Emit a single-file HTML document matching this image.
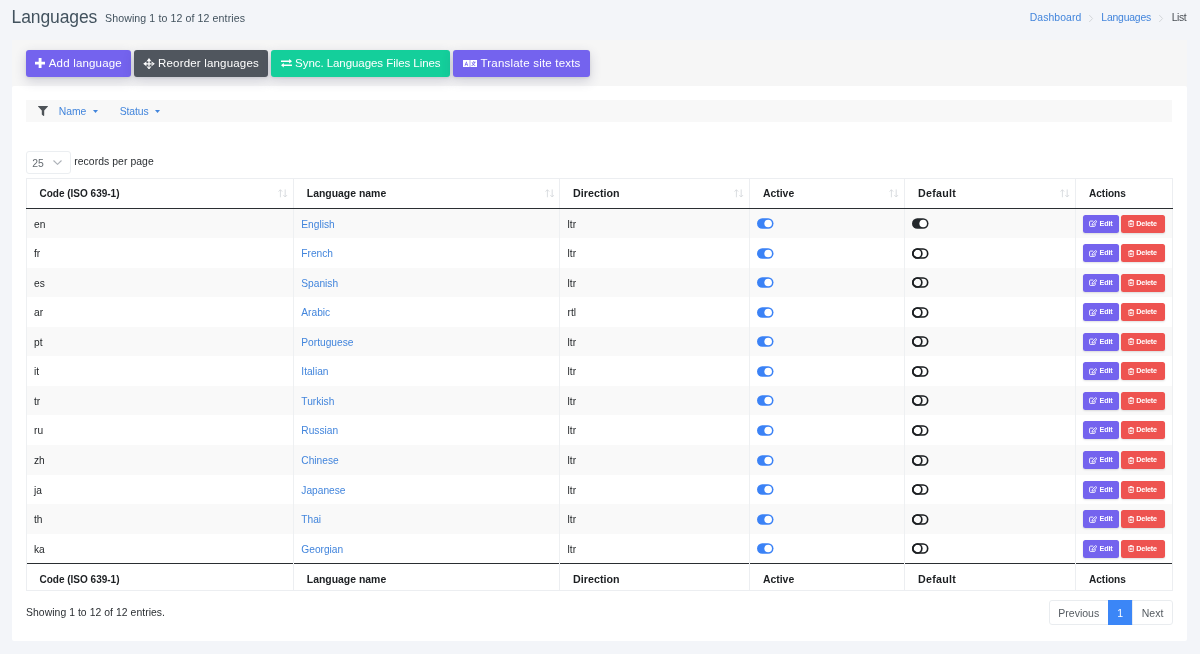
<!DOCTYPE html>
<html lang="en">
<head>
<meta charset="utf-8">
<title>Languages</title>
<style>
*{box-sizing:border-box;margin:0;padding:0}
html,body{width:1200px;height:654px;overflow:hidden}
body{background:#f3f5f9;font-family:"Liberation Sans",sans-serif;color:#2b2f33;position:relative;font-size:10.5px}
a{color:#4285dc;text-decoration:none}
main{position:absolute;left:0;top:0;width:1200px;height:654px;will-change:transform}
.abs{position:absolute;white-space:nowrap}
h1.abs{font-weight:400}
.btn{position:absolute;top:50px;height:27px;border-radius:3px;color:#fff;box-shadow:0 4px 12px rgba(50,50,93,.20),0 1px 3px rgba(0,0,0,.08)}
.btn .abs{color:#fff}
.btn svg{position:absolute;fill:#fff}
.band{position:absolute;left:12px;top:39.5px;width:1175px;height:50px;background:#f6f6f6}
.card{position:absolute;left:12px;top:86px;width:1175px;height:555px;background:#fff;border-radius:2px}
.filters{position:absolute;left:26px;top:100px;width:1146px;height:22px;background:#f8f8f8}
.sel{position:absolute;left:26px;top:151px;width:45px;height:22.6px;border:1px solid #ebeef1;border-radius:3px;background:#fff}
table{position:absolute;left:25.5px;top:178px;width:1147.4px;border-collapse:collapse;table-layout:fixed}
th{text-align:left;vertical-align:baseline;line-height:14px;font-weight:700;font-size:9.9px;color:#1c1f22;padding:7px 0 0 13px;border:1px solid #eceef1;position:relative;white-space:nowrap}
thead th{height:30px;border-bottom:1px solid #2a2e32}
tfoot th{height:27px;padding-top:8px;border-top:1px solid #2a2e32}
td{padding:1px 0 0 7.5px;border-left:1px solid #eef0f2;border-right:1px solid #eef0f2;color:#25282b;vertical-align:middle;font-size:10.2px;white-space:nowrap;position:relative}
tbody tr:nth-child(odd){background:#f9f9f9}
.sort{position:absolute;right:5px;top:10.3px;width:9.6px;height:8.7px}
.tg{display:block;width:16.5px;height:11px;position:relative;top:-.2px}
.ab{position:absolute;top:calc(50% - 8.9px);height:18px;border-radius:2.5px;color:#fff;font-size:7.2px;font-weight:700;letter-spacing:-0.15px;line-height:18.4px;box-shadow:0 1px 2px rgba(0,0,0,.12)}
.ab svg{position:absolute;left:6px;top:5.6px;width:8.6px;height:7px}
.ab span{position:absolute;top:0}
.pg{position:absolute;top:600px;height:25px;line-height:24px;font-size:10.5px;color:#555b61;border:1px solid #e9ecef;background:#fff;text-align:center}
</style>
</head>
<body>
<main>
<div class="band"></div>
<div class="card"></div>
<header>
<h1 class="abs" style="left:11.60px;top:4.01px;font-size:17.5px;line-height:26.25px;letter-spacing:-0.116px;color:#42525e;">Languages</h1>
<small class="abs" style="left:105.00px;top:11.38px;font-size:10.6px;line-height:15.9px;letter-spacing:0.099px;color:#42525e;">Showing 1 to 12 of 12 entries</small>
<nav>
<a class="abs" style="left:1029.70px;top:10.20px;font-size:10.4px;line-height:15.6px;letter-spacing:0.095px;color:#4285dc;">Dashboard</a>
<svg class="abs" style="left:1088px;top:13.500px" width="6" height="9" viewBox="0 0 6 9"><path d="M1.2 1 L4.6 4.5 L1.2 8" fill="none" stroke="#d3d6da" stroke-width="1"/></svg>
<a class="abs" style="left:1101.30px;top:10.20px;font-size:10.4px;line-height:15.6px;letter-spacing:-0.192px;color:#4285dc;">Languages</a>
<svg class="abs" style="left:1158px;top:13.500px" width="6" height="9" viewBox="0 0 6 9"><path d="M1.2 1 L4.6 4.5 L1.2 8" fill="none" stroke="#d3d6da" stroke-width="1"/></svg>
<span class="abs" style="left:1171.70px;top:10.20px;font-size:10.4px;line-height:15.6px;letter-spacing:-0.391px;color:#4a4f55;">List</span>
</nav>
</header>
<section class="toolbar">
<a class="btn" style="left:26px;width:105px;background:#7463ee"><svg style="left:9.1px;top:8.3px" width="10.200" height="10.200" viewBox="0 0 10 10"><path d="M3.600 0h2.800v3.600H10v2.800H6.400V10H3.600V6.400H0V3.600h3.600z"/></svg><span class="abs" style="left:22.75px;top:4.89px;font-size:11.5px;line-height:17.25px;letter-spacing:0.183px;color:#fff;">Add language</span></a>
<a class="btn" style="left:134px;width:134px;background:#50565e"><svg style="left:9px;top:7.8px" width="12" height="11.6" viewBox="0 0 12 12"><path d="M6 0 L8.5 3.300H3.500z M6 12 L8.500 8.700H3.500z M0 6 L3.300 3.500V8.500z M12 6 L8.700 3.500V8.500z M5.350 2.500h1.300v7h-1.300z M2.500 5.350h7v1.300h-7z"/></svg><span class="abs" style="left:24.00px;top:4.89px;font-size:11.5px;line-height:17.25px;letter-spacing:0.183px;color:#fff;">Reorder languages</span></a>
<a class="btn" style="left:271.4px;width:178.20000000000005px;background:#14cf9b"><svg style="left:9.4px;top:9.4px" width="11" height="8.4" viewBox="0 0 11 8.4"><path d="M8.2 0 L11 2.2 8.2 4.4V2.9H0V1.5H8.2z M2.8 4 V5.5H11V6.9H2.8V8.4L0 6.2z"/></svg><span class="abs" style="left:23.70px;top:4.89px;font-size:11.5px;line-height:17.25px;letter-spacing:-0.059px;color:#fff;">Sync. Languages Files Lines</span></a>
<a class="btn" style="left:453.2px;width:136.8px;background:#7463ee"><svg style="left:9.5px;top:10px" width="14" height="7" viewBox="0 0 14 7"><path fill-rule="evenodd" d="M0 0h6.7v7H0z M3.35 1.3 L1.5 5.7h.9l.3-.9h1.3l.3.9h.9z M3.35 2.7l.4 1.4h-.8z M7.3 0H14v7H7.3z M10.3 1.2v.7H8.6v.7h2.6c-.1.5-.4 1-.8 1.4-.3-.3-.5-.6-.6-.9h-.8c.2.5.5 1 .9 1.4-.4.3-.9.6-1.5.7l.3.7c.7-.2 1.300-.5 1.700-.9.400.4 1 .7 1.700.9l.3-.7c-.6-.1-1.100-.4-1.500-.7.500-.5.900-1.200 1-2h.8v-.7H11v-.7z"/></svg><span class="abs" style="left:27.30px;top:4.89px;font-size:11.5px;line-height:17.25px;letter-spacing:0.2px;color:#fff;">Translate site texts</span></a>
</section>
<div class="filters"></div>
<nav class="filterlinks">
<svg class="abs" style="left:37.5px;top:106.3px" width="10" height="10" viewBox="0 0 10 10"><path d="M0.3 0h9.4c.3 0 .4.3.2.5L6.2 4.6V9.6c0 .3-.3.5-.6.300L4 8.700c-.1-.1-.2-.2-.2-.4V4.600L0.100.5C-.1.300 0 0 .3 0z" fill="#4e5358"/></svg>
<a class="abs" style="left:58.70px;top:103.60px;font-size:10.4px;line-height:15.6px;letter-spacing:-0.04px;color:#4285dc;">Name</a>
<svg class="abs" style="left:92.5px;top:109.7px" width="5" height="3" viewBox="0 0 5 3"><path d="M0 0h5L2.500 3z" fill="#4285dc"/></svg>
<a class="abs" style="left:119.70px;top:103.60px;font-size:10.4px;line-height:15.6px;letter-spacing:-0.094px;color:#4285dc;">Status</a>
<svg class="abs" style="left:154.7px;top:109.7px" width="5" height="3" viewBox="0 0 5 3"><path d="M0 0h5L2.500 3z" fill="#4285dc"/></svg>
</nav>
<label>
<div class="sel"></div>
<span class="abs" style="left:32.20px;top:155.80px;font-size:10.4px;line-height:15.6px;letter-spacing:0.137px;color:#666c72;">25</span>
<svg class="abs" style="left:53px;top:160px" width="9" height="5" viewBox="0 0 9 5"><path d="M0.500 0.500 L4.500 4.300 8.500 0.500" fill="none" stroke="#adb2b8" stroke-width="1.150"/></svg>
<span class="abs" style="left:74.25px;top:154.10px;font-size:10.4px;line-height:15.6px;letter-spacing:0.062px;color:#2b2f33;">records per page</span>
</label>
<table>
<colgroup><col style="width:267.3px"><col style="width:266.3px"><col style="width:189.9px"><col style="width:155px"><col style="width:170.9px"><col style="width:97px"></colgroup>
<thead><tr><th style="font-size:10.02px;letter-spacing:-0.01px">Code (ISO 639-1)<svg class="sort" viewBox="0 0 10 10" preserveAspectRatio="none"><path d="M2.500 9.500V1 M0.600 3 L2.500 0.800 4.400 3 M7.500 0.500V9 M5.600 7 L7.500 9.200 9.400 7" fill="none" stroke="#d2d5d9" stroke-width="0.9"/></svg></th><th style="font-size:10.45px;letter-spacing:-0.006px">Language name<svg class="sort" viewBox="0 0 10 10" preserveAspectRatio="none"><path d="M2.500 9.500V1 M0.600 3 L2.500 0.800 4.400 3 M7.500 0.500V9 M5.600 7 L7.500 9.200 9.400 7" fill="none" stroke="#d2d5d9" stroke-width="0.9"/></svg></th><th style="font-size:10.7px;letter-spacing:0.021px">Direction<svg class="sort" viewBox="0 0 10 10" preserveAspectRatio="none"><path d="M2.500 9.500V1 M0.600 3 L2.500 0.800 4.400 3 M7.500 0.500V9 M5.600 7 L7.500 9.200 9.400 7" fill="none" stroke="#d2d5d9" stroke-width="0.9"/></svg></th><th style="font-size:10.42px;letter-spacing:-0.007px">Active<svg class="sort" viewBox="0 0 10 10" preserveAspectRatio="none"><path d="M2.500 9.500V1 M0.600 3 L2.500 0.800 4.400 3 M7.500 0.500V9 M5.600 7 L7.500 9.200 9.400 7" fill="none" stroke="#d2d5d9" stroke-width="0.9"/></svg></th><th style="font-size:10.7px;letter-spacing:0.261px">Default<svg class="sort" viewBox="0 0 10 10" preserveAspectRatio="none"><path d="M2.500 9.500V1 M0.600 3 L2.500 0.800 4.400 3 M7.500 0.500V9 M5.600 7 L7.500 9.200 9.400 7" fill="none" stroke="#d2d5d9" stroke-width="0.9"/></svg></th><th style="font-size:10.11px;letter-spacing:-0.003px">Actions</th></tr></thead>
<tbody>
<tr style="height:29.5px"><td>en</td><td><a>English</a></td><td>ltr</td><td><svg class="tg" viewBox="0 0 17 11"><rect width="17" height="11" rx="5.500" fill="#3b82f6"/><circle cx="11.500" cy="5.500" r="3.900" fill="#fff"/></svg></td><td><svg class="tg" viewBox="0 0 17 11"><rect width="17" height="11" rx="5.500" fill="#24282c"/><circle cx="11.500" cy="5.500" r="3.900" fill="#fff"/></svg></td><td><a class="ab" style="left:7.500px;width:36px;background:#7463ee"><svg viewBox="0 0 8.6 7"><path d="M4.300 1.100H1.300c-.4 0-.7.300-.7.700v3.900c0 .4.300.7.700.7h4.200c.4 0 .7-.300.700-.7V3.900 M3.300 3.700 L6.700.5l1.200 1.100-3.500 3.300-1.400.2z" fill="none" stroke="#fff" stroke-width="0.9"/></svg><span style="left:16.2px">Edit</span></a><a class="ab" style="left:45.4px;width:43.4px;background:#ee5350"><svg viewBox="0 0 8.6 7" style="left:6.3px"><path d="M0.300 1.400h5.600 M2 1.400V.5h2.200v.9 M.9 1.400v4.600c0 .3.200.5.500.5h3.400c.3 0 .5-.2.500-.5V1.400 M2.400 2.800v2.400 M3.800 2.800v2.400" fill="none" stroke="#fff" stroke-width="0.85"/></svg><span style="left:15px">Delete</span></a></td></tr>
<tr style="height:30px"><td>fr</td><td><a>French</a></td><td>ltr</td><td><svg class="tg" viewBox="0 0 17 11"><rect width="17" height="11" rx="5.500" fill="#3b82f6"/><circle cx="11.500" cy="5.500" r="3.900" fill="#fff"/></svg></td><td><svg class="tg" viewBox="0 0 17 11"><rect x="0.850" y="0.850" width="15.300" height="9.300" rx="4.650" fill="none" stroke="#1b1e21" stroke-width="1.700"/><circle cx="5.500" cy="5.500" r="4.650" fill="none" stroke="#1b1e21" stroke-width="1.700"/></svg></td><td><a class="ab" style="left:7.500px;width:36px;background:#7463ee"><svg viewBox="0 0 8.6 7"><path d="M4.300 1.100H1.300c-.4 0-.7.300-.7.700v3.900c0 .4.300.7.700.7h4.200c.4 0 .7-.300.700-.7V3.900 M3.300 3.700 L6.700.5l1.200 1.100-3.500 3.300-1.400.2z" fill="none" stroke="#fff" stroke-width="0.9"/></svg><span style="left:16.2px">Edit</span></a><a class="ab" style="left:45.4px;width:43.4px;background:#ee5350"><svg viewBox="0 0 8.6 7" style="left:6.3px"><path d="M0.300 1.400h5.600 M2 1.400V.5h2.200v.9 M.9 1.400v4.600c0 .3.200.5.500.5h3.400c.3 0 .5-.2.500-.5V1.400 M2.400 2.800v2.400 M3.800 2.800v2.400" fill="none" stroke="#fff" stroke-width="0.85"/></svg><span style="left:15px">Delete</span></a></td></tr>
<tr style="height:29px"><td>es</td><td><a>Spanish</a></td><td>ltr</td><td><svg class="tg" viewBox="0 0 17 11"><rect width="17" height="11" rx="5.500" fill="#3b82f6"/><circle cx="11.500" cy="5.500" r="3.900" fill="#fff"/></svg></td><td><svg class="tg" viewBox="0 0 17 11"><rect x="0.850" y="0.850" width="15.300" height="9.300" rx="4.650" fill="none" stroke="#1b1e21" stroke-width="1.700"/><circle cx="5.500" cy="5.500" r="4.650" fill="none" stroke="#1b1e21" stroke-width="1.700"/></svg></td><td><a class="ab" style="left:7.500px;width:36px;background:#7463ee"><svg viewBox="0 0 8.6 7"><path d="M4.300 1.100H1.300c-.4 0-.7.300-.7.700v3.900c0 .4.300.7.700.7h4.200c.4 0 .7-.300.700-.7V3.900 M3.300 3.700 L6.700.5l1.200 1.100-3.500 3.300-1.400.2z" fill="none" stroke="#fff" stroke-width="0.9"/></svg><span style="left:16.2px">Edit</span></a><a class="ab" style="left:45.4px;width:43.4px;background:#ee5350"><svg viewBox="0 0 8.6 7" style="left:6.3px"><path d="M0.300 1.400h5.600 M2 1.400V.5h2.200v.9 M.9 1.400v4.600c0 .3.200.5.500.5h3.400c.3 0 .5-.2.500-.5V1.400 M2.400 2.800v2.400 M3.800 2.800v2.400" fill="none" stroke="#fff" stroke-width="0.85"/></svg><span style="left:15px">Delete</span></a></td></tr>
<tr style="height:30px"><td>ar</td><td><a>Arabic</a></td><td>rtl</td><td><svg class="tg" viewBox="0 0 17 11"><rect width="17" height="11" rx="5.500" fill="#3b82f6"/><circle cx="11.500" cy="5.500" r="3.900" fill="#fff"/></svg></td><td><svg class="tg" viewBox="0 0 17 11"><rect x="0.850" y="0.850" width="15.300" height="9.300" rx="4.650" fill="none" stroke="#1b1e21" stroke-width="1.700"/><circle cx="5.500" cy="5.500" r="4.650" fill="none" stroke="#1b1e21" stroke-width="1.700"/></svg></td><td><a class="ab" style="left:7.500px;width:36px;background:#7463ee"><svg viewBox="0 0 8.6 7"><path d="M4.300 1.100H1.300c-.4 0-.7.300-.7.700v3.900c0 .4.300.7.700.7h4.200c.4 0 .7-.300.700-.7V3.900 M3.300 3.700 L6.700.5l1.200 1.100-3.500 3.300-1.400.2z" fill="none" stroke="#fff" stroke-width="0.9"/></svg><span style="left:16.2px">Edit</span></a><a class="ab" style="left:45.4px;width:43.4px;background:#ee5350"><svg viewBox="0 0 8.6 7" style="left:6.3px"><path d="M0.300 1.400h5.600 M2 1.400V.5h2.200v.9 M.9 1.400v4.600c0 .3.200.5.500.5h3.400c.3 0 .5-.2.500-.5V1.400 M2.400 2.800v2.400 M3.800 2.800v2.400" fill="none" stroke="#fff" stroke-width="0.85"/></svg><span style="left:15px">Delete</span></a></td></tr>
<tr style="height:29px"><td>pt</td><td><a>Portuguese</a></td><td>ltr</td><td><svg class="tg" viewBox="0 0 17 11"><rect width="17" height="11" rx="5.500" fill="#3b82f6"/><circle cx="11.500" cy="5.500" r="3.900" fill="#fff"/></svg></td><td><svg class="tg" viewBox="0 0 17 11"><rect x="0.850" y="0.850" width="15.300" height="9.300" rx="4.650" fill="none" stroke="#1b1e21" stroke-width="1.700"/><circle cx="5.500" cy="5.500" r="4.650" fill="none" stroke="#1b1e21" stroke-width="1.700"/></svg></td><td><a class="ab" style="left:7.500px;width:36px;background:#7463ee"><svg viewBox="0 0 8.6 7"><path d="M4.300 1.100H1.300c-.4 0-.7.300-.7.700v3.900c0 .4.300.7.700.7h4.200c.4 0 .7-.300.700-.7V3.900 M3.300 3.700 L6.700.5l1.200 1.100-3.500 3.300-1.400.2z" fill="none" stroke="#fff" stroke-width="0.9"/></svg><span style="left:16.2px">Edit</span></a><a class="ab" style="left:45.4px;width:43.4px;background:#ee5350"><svg viewBox="0 0 8.6 7" style="left:6.3px"><path d="M0.300 1.400h5.600 M2 1.400V.5h2.200v.9 M.9 1.400v4.600c0 .3.200.5.500.5h3.400c.3 0 .5-.2.500-.5V1.400 M2.400 2.800v2.400 M3.800 2.800v2.400" fill="none" stroke="#fff" stroke-width="0.85"/></svg><span style="left:15px">Delete</span></a></td></tr>
<tr style="height:30px"><td>it</td><td><a>Italian</a></td><td>ltr</td><td><svg class="tg" viewBox="0 0 17 11"><rect width="17" height="11" rx="5.500" fill="#3b82f6"/><circle cx="11.500" cy="5.500" r="3.900" fill="#fff"/></svg></td><td><svg class="tg" viewBox="0 0 17 11"><rect x="0.850" y="0.850" width="15.300" height="9.300" rx="4.650" fill="none" stroke="#1b1e21" stroke-width="1.700"/><circle cx="5.500" cy="5.500" r="4.650" fill="none" stroke="#1b1e21" stroke-width="1.700"/></svg></td><td><a class="ab" style="left:7.500px;width:36px;background:#7463ee"><svg viewBox="0 0 8.6 7"><path d="M4.300 1.100H1.300c-.4 0-.7.300-.7.700v3.900c0 .4.300.7.700.7h4.200c.4 0 .7-.300.700-.7V3.900 M3.300 3.700 L6.700.5l1.200 1.100-3.500 3.300-1.400.2z" fill="none" stroke="#fff" stroke-width="0.9"/></svg><span style="left:16.2px">Edit</span></a><a class="ab" style="left:45.4px;width:43.4px;background:#ee5350"><svg viewBox="0 0 8.6 7" style="left:6.3px"><path d="M0.300 1.400h5.600 M2 1.400V.5h2.200v.9 M.9 1.400v4.600c0 .3.200.5.500.5h3.400c.3 0 .5-.2.500-.5V1.400 M2.400 2.800v2.400 M3.800 2.800v2.400" fill="none" stroke="#fff" stroke-width="0.85"/></svg><span style="left:15px">Delete</span></a></td></tr>
<tr style="height:29px"><td>tr</td><td><a>Turkish</a></td><td>ltr</td><td><svg class="tg" viewBox="0 0 17 11"><rect width="17" height="11" rx="5.500" fill="#3b82f6"/><circle cx="11.500" cy="5.500" r="3.900" fill="#fff"/></svg></td><td><svg class="tg" viewBox="0 0 17 11"><rect x="0.850" y="0.850" width="15.300" height="9.300" rx="4.650" fill="none" stroke="#1b1e21" stroke-width="1.700"/><circle cx="5.500" cy="5.500" r="4.650" fill="none" stroke="#1b1e21" stroke-width="1.700"/></svg></td><td><a class="ab" style="left:7.500px;width:36px;background:#7463ee"><svg viewBox="0 0 8.6 7"><path d="M4.300 1.100H1.300c-.4 0-.7.300-.7.700v3.900c0 .4.300.7.700.7h4.200c.4 0 .7-.300.700-.7V3.900 M3.300 3.700 L6.700.5l1.200 1.100-3.500 3.300-1.400.2z" fill="none" stroke="#fff" stroke-width="0.9"/></svg><span style="left:16.2px">Edit</span></a><a class="ab" style="left:45.4px;width:43.4px;background:#ee5350"><svg viewBox="0 0 8.6 7" style="left:6.3px"><path d="M0.300 1.400h5.600 M2 1.400V.5h2.200v.9 M.9 1.400v4.600c0 .3.200.5.500.5h3.400c.3 0 .5-.2.500-.5V1.400 M2.400 2.800v2.400 M3.800 2.800v2.400" fill="none" stroke="#fff" stroke-width="0.85"/></svg><span style="left:15px">Delete</span></a></td></tr>
<tr style="height:30px"><td>ru</td><td><a>Russian</a></td><td>ltr</td><td><svg class="tg" viewBox="0 0 17 11"><rect width="17" height="11" rx="5.500" fill="#3b82f6"/><circle cx="11.500" cy="5.500" r="3.900" fill="#fff"/></svg></td><td><svg class="tg" viewBox="0 0 17 11"><rect x="0.850" y="0.850" width="15.300" height="9.300" rx="4.650" fill="none" stroke="#1b1e21" stroke-width="1.700"/><circle cx="5.500" cy="5.500" r="4.650" fill="none" stroke="#1b1e21" stroke-width="1.700"/></svg></td><td><a class="ab" style="left:7.500px;width:36px;background:#7463ee"><svg viewBox="0 0 8.6 7"><path d="M4.300 1.100H1.300c-.4 0-.7.300-.7.700v3.900c0 .4.300.7.700.7h4.200c.4 0 .7-.300.700-.7V3.900 M3.300 3.700 L6.700.5l1.200 1.100-3.500 3.300-1.400.2z" fill="none" stroke="#fff" stroke-width="0.9"/></svg><span style="left:16.2px">Edit</span></a><a class="ab" style="left:45.4px;width:43.4px;background:#ee5350"><svg viewBox="0 0 8.6 7" style="left:6.3px"><path d="M0.300 1.400h5.600 M2 1.400V.5h2.200v.9 M.9 1.400v4.600c0 .3.200.5.500.5h3.400c.3 0 .5-.2.500-.5V1.400 M2.400 2.800v2.400 M3.800 2.800v2.400" fill="none" stroke="#fff" stroke-width="0.85"/></svg><span style="left:15px">Delete</span></a></td></tr>
<tr style="height:30px"><td>zh</td><td><a>Chinese</a></td><td>ltr</td><td><svg class="tg" viewBox="0 0 17 11"><rect width="17" height="11" rx="5.500" fill="#3b82f6"/><circle cx="11.500" cy="5.500" r="3.900" fill="#fff"/></svg></td><td><svg class="tg" viewBox="0 0 17 11"><rect x="0.850" y="0.850" width="15.300" height="9.300" rx="4.650" fill="none" stroke="#1b1e21" stroke-width="1.700"/><circle cx="5.500" cy="5.500" r="4.650" fill="none" stroke="#1b1e21" stroke-width="1.700"/></svg></td><td><a class="ab" style="left:7.500px;width:36px;background:#7463ee"><svg viewBox="0 0 8.6 7"><path d="M4.300 1.100H1.300c-.4 0-.7.300-.7.700v3.900c0 .4.300.7.700.7h4.200c.4 0 .7-.300.700-.7V3.900 M3.300 3.700 L6.700.5l1.200 1.100-3.500 3.300-1.400.2z" fill="none" stroke="#fff" stroke-width="0.9"/></svg><span style="left:16.2px">Edit</span></a><a class="ab" style="left:45.4px;width:43.4px;background:#ee5350"><svg viewBox="0 0 8.6 7" style="left:6.3px"><path d="M0.300 1.400h5.600 M2 1.400V.5h2.200v.9 M.9 1.400v4.600c0 .3.200.5.500.5h3.400c.3 0 .5-.2.500-.5V1.400 M2.400 2.800v2.400 M3.800 2.800v2.400" fill="none" stroke="#fff" stroke-width="0.85"/></svg><span style="left:15px">Delete</span></a></td></tr>
<tr style="height:29px"><td>ja</td><td><a>Japanese</a></td><td>ltr</td><td><svg class="tg" viewBox="0 0 17 11"><rect width="17" height="11" rx="5.500" fill="#3b82f6"/><circle cx="11.500" cy="5.500" r="3.900" fill="#fff"/></svg></td><td><svg class="tg" viewBox="0 0 17 11"><rect x="0.850" y="0.850" width="15.300" height="9.300" rx="4.650" fill="none" stroke="#1b1e21" stroke-width="1.700"/><circle cx="5.500" cy="5.500" r="4.650" fill="none" stroke="#1b1e21" stroke-width="1.700"/></svg></td><td><a class="ab" style="left:7.500px;width:36px;background:#7463ee"><svg viewBox="0 0 8.6 7"><path d="M4.300 1.100H1.300c-.4 0-.7.300-.7.700v3.900c0 .4.300.7.700.7h4.200c.4 0 .7-.300.700-.7V3.900 M3.300 3.700 L6.700.5l1.200 1.100-3.500 3.300-1.400.2z" fill="none" stroke="#fff" stroke-width="0.9"/></svg><span style="left:16.2px">Edit</span></a><a class="ab" style="left:45.4px;width:43.4px;background:#ee5350"><svg viewBox="0 0 8.6 7" style="left:6.3px"><path d="M0.300 1.400h5.600 M2 1.400V.5h2.200v.9 M.9 1.400v4.600c0 .3.200.5.500.5h3.400c.3 0 .5-.2.500-.5V1.400 M2.400 2.800v2.400 M3.800 2.800v2.400" fill="none" stroke="#fff" stroke-width="0.85"/></svg><span style="left:15px">Delete</span></a></td></tr>
<tr style="height:30px"><td>th</td><td><a>Thai</a></td><td>ltr</td><td><svg class="tg" viewBox="0 0 17 11"><rect width="17" height="11" rx="5.500" fill="#3b82f6"/><circle cx="11.500" cy="5.500" r="3.900" fill="#fff"/></svg></td><td><svg class="tg" viewBox="0 0 17 11"><rect x="0.850" y="0.850" width="15.300" height="9.300" rx="4.650" fill="none" stroke="#1b1e21" stroke-width="1.700"/><circle cx="5.500" cy="5.500" r="4.650" fill="none" stroke="#1b1e21" stroke-width="1.700"/></svg></td><td><a class="ab" style="left:7.500px;width:36px;background:#7463ee"><svg viewBox="0 0 8.6 7"><path d="M4.300 1.100H1.300c-.4 0-.7.300-.7.700v3.900c0 .4.300.7.700.7h4.200c.4 0 .7-.300.700-.7V3.900 M3.300 3.700 L6.700.5l1.200 1.100-3.500 3.300-1.400.2z" fill="none" stroke="#fff" stroke-width="0.9"/></svg><span style="left:16.2px">Edit</span></a><a class="ab" style="left:45.4px;width:43.4px;background:#ee5350"><svg viewBox="0 0 8.6 7" style="left:6.3px"><path d="M0.300 1.400h5.600 M2 1.400V.5h2.200v.9 M.9 1.400v4.600c0 .3.200.5.500.5h3.400c.3 0 .5-.2.500-.5V1.400 M2.400 2.800v2.400 M3.800 2.800v2.400" fill="none" stroke="#fff" stroke-width="0.85"/></svg><span style="left:15px">Delete</span></a></td></tr>
<tr style="height:29.5px"><td>ka</td><td><a>Georgian</a></td><td>ltr</td><td><svg class="tg" viewBox="0 0 17 11"><rect width="17" height="11" rx="5.500" fill="#3b82f6"/><circle cx="11.500" cy="5.500" r="3.900" fill="#fff"/></svg></td><td><svg class="tg" viewBox="0 0 17 11"><rect x="0.850" y="0.850" width="15.300" height="9.300" rx="4.650" fill="none" stroke="#1b1e21" stroke-width="1.700"/><circle cx="5.500" cy="5.500" r="4.650" fill="none" stroke="#1b1e21" stroke-width="1.700"/></svg></td><td><a class="ab" style="left:7.500px;width:36px;background:#7463ee"><svg viewBox="0 0 8.6 7"><path d="M4.300 1.100H1.300c-.4 0-.7.300-.7.700v3.900c0 .4.300.7.700.7h4.200c.4 0 .7-.300.700-.7V3.900 M3.300 3.700 L6.700.5l1.200 1.100-3.500 3.300-1.400.2z" fill="none" stroke="#fff" stroke-width="0.9"/></svg><span style="left:16.2px">Edit</span></a><a class="ab" style="left:45.4px;width:43.4px;background:#ee5350"><svg viewBox="0 0 8.6 7" style="left:6.3px"><path d="M0.300 1.400h5.600 M2 1.400V.5h2.200v.9 M.9 1.400v4.600c0 .3.200.5.500.5h3.400c.3 0 .5-.2.500-.5V1.400 M2.400 2.800v2.400 M3.800 2.800v2.400" fill="none" stroke="#fff" stroke-width="0.85"/></svg><span style="left:15px">Delete</span></a></td></tr>
</tbody>
<tfoot><tr><th style="font-size:10.02px;letter-spacing:-0.01px">Code (ISO 639-1)</th><th style="font-size:10.45px;letter-spacing:-0.006px">Language name</th><th style="font-size:10.7px;letter-spacing:0.021px">Direction</th><th style="font-size:10.42px;letter-spacing:-0.007px">Active</th><th style="font-size:10.7px;letter-spacing:0.261px">Default</th><th style="font-size:10.11px;letter-spacing:-0.003px">Actions</th></tr></tfoot>
</table>
<span class="abs" style="left:26.00px;top:604.60px;font-size:10.4px;line-height:15.6px;letter-spacing:0.052px;color:#2b2f33;">Showing 1 to 12 of 12 entries.</span>
<nav class="pagination">
<div class="pg" style="left:1049px;width:59.500px;border-radius:3px 0 0 3px">Previous</div>
<div class="pg" style="left:1108px;width:24.500px;background:#3b86f7;border-color:#3b86f7;color:#fff">1</div>
<div class="pg" style="left:1132px;width:41px;border-radius:0 3px 3px 0">Next</div>
</nav>
</main>
</body>
</html>
